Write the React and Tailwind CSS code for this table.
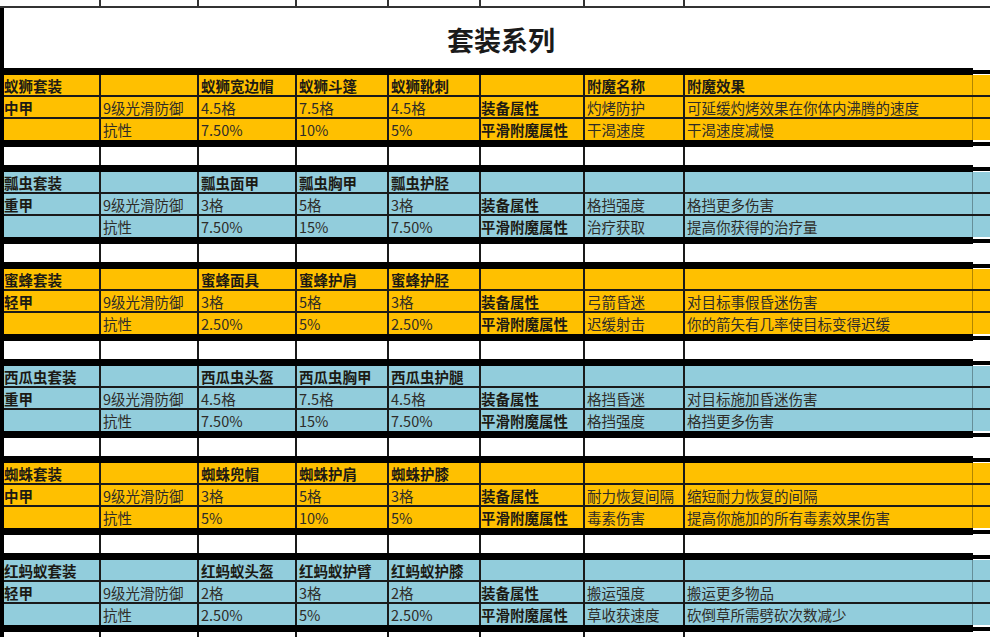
import React from "react";

const GRID = "grid grid-cols-[97px_98px_98px_92px_92px_104px_100px_288px_17px]";
const YELLOW = "bg-[#FFC000]";
const BLUE = "bg-[#92CDDC]";

const blocks = [
  {
    bg: YELLOW,
    rows: [
      ["蚁狮套装", "", "蚁狮宽边帽", "蚁狮斗篷", "蚁狮靴刺", "", "附魔名称", "附魔效果"],
      ["中甲", "9级光滑防御", "4.5格", "7.5格", "4.5格", "装备属性", "灼烤防护", "可延缓灼烤效果在你体内沸腾的速度"],
      ["", "抗性", "7.50%", "10%", "5%", "平滑附魔属性", "干渴速度", "干渴速度减慢"],
    ],
  },
  {
    bg: BLUE,
    rows: [
      ["瓢虫套装", "", "瓢虫面甲", "瓢虫胸甲", "瓢虫护胫", "", "", ""],
      ["重甲", "9级光滑防御", "3格", "5格", "3格", "装备属性", "格挡强度", "格挡更多伤害"],
      ["", "抗性", "7.50%", "15%", "7.50%", "平滑附魔属性", "治疗获取", "提高你获得的治疗量"],
    ],
  },
  {
    bg: YELLOW,
    rows: [
      ["蜜蜂套装", "", "蜜蜂面具", "蜜蜂护肩", "蜜蜂护胫", "", "", ""],
      ["轻甲", "9级光滑防御", "3格", "5格", "3格", "装备属性", "弓箭昏迷", "对目标事假昏迷伤害"],
      ["", "抗性", "2.50%", "5%", "2.50%", "平滑附魔属性", "迟缓射击", "你的箭矢有几率使目标变得迟缓"],
    ],
  },
  {
    bg: BLUE,
    rows: [
      ["西瓜虫套装", "", "西瓜虫头盔", "西瓜虫胸甲", "西瓜虫护腿", "", "", ""],
      ["重甲", "9级光滑防御", "4.5格", "7.5格", "4.5格", "装备属性", "格挡昏迷", "对目标施加昏迷伤害"],
      ["", "抗性", "7.50%", "15%", "7.50%", "平滑附魔属性", "格挡强度", "格挡更多伤害"],
    ],
  },
  {
    bg: YELLOW,
    rows: [
      ["蜘蛛套装", "", "蜘蛛兜帽", "蜘蛛护肩", "蜘蛛护膝", "", "", ""],
      ["中甲", "9级光滑防御", "3格", "5格", "3格", "装备属性", "耐力恢复间隔", "缩短耐力恢复的间隔"],
      ["", "抗性", "5%", "10%", "5%", "平滑附魔属性", "毒素伤害", "提高你施加的所有毒素效果伤害"],
    ],
  },
  {
    bg: BLUE,
    rows: [
      ["红蚂蚁套装", "", "红蚂蚁头盔", "红蚂蚁护臂", "红蚂蚁护膝", "", "", ""],
      ["轻甲", "9级光滑防御", "2格", "3格", "2格", "装备属性", "搬运强度", "搬运更多物品"],
      ["", "抗性", "2.50%", "5%", "2.50%", "平滑附魔属性", "草收获速度", "砍倒草所需劈砍次数减少"],
    ],
  },
];

function isBold(r, c) {
  if (c === 0 || c === 5) return true;
  if (r === 0) return true;
  return false;
}

function Cell({ children, col, bold, blank }) {
  const border =
    col === 8
      ? ""
      : col === 7
      ? blank
        ? ""
        : "border-r border-black/30"
      : "border-r-2 border-[#1a1a1a]";
  const pad = col === 0 || col === 5 ? "pl-0" : "pl-[2px]";
  return (
    <div
      className={`${border} ${pad} pt-[2px] flex items-center overflow-hidden whitespace-nowrap leading-none ${
        bold ? "font-bold text-[#1c1a14]" : "font-normal text-[#2e2c28]"
      }`}
    >
      {children}
    </div>
  );
}

function Row({ cells, bg, r, last }) {
  const all = [...cells, ""];
  return (
    <div
      className={`${GRID} ${bg} ${
        last ? "h-[21px]" : "h-[22px] border-b-2 border-[#1a1a1a]"
      }`}
    >
      {all.map((t, c) => (
        <Cell key={c} col={c} bold={isBold(r, c)}>
          {t}
        </Cell>
      ))}
    </div>
  );
}

function Thick() {
  return (
    <div className="flex h-[7px]">
      <div className="w-[969px] bg-black" />
      <div className="w-[17px] flex items-center">
        <div className="h-[4px] w-full bg-black" />
      </div>
    </div>
  );
}

function Blank() {
  return (
    <div className={`${GRID} h-[18px] bg-white`}>
      {Array.from({ length: 9 }).map((_, c) => (
        <Cell key={c} col={c} blank />
      ))}
    </div>
  );
}

export default function App() {
  return (
    <div
      className="w-[990px] h-[637px] overflow-hidden bg-white text-[14.5px]"
      style={{ fontFamily: '"Noto Sans CJK SC", "Noto Sans", sans-serif' }}
    >
      {/* partial row at the very top */}
      <div className="flex h-[8px] border-b-2 border-[#333]">
        {[101, 98, 98, 92, 92, 104, 100].map((w, i) => (
          <div key={i} style={{ width: w }} className="border-r-2 border-[#333]" />
        ))}
      </div>

      <div className="border-l-4 border-black">
        <div className="h-[60px] flex items-center justify-center pt-[4px] pl-[8px] text-[27px] font-bold text-[#1a1a1a]">
          套装系列
        </div>
        <Thick />
        {blocks.map((b, i) => (
          <div key={i}>
            {b.rows.map((cells, r) => (
              <Row key={r} cells={cells} bg={b.bg} r={r} last={r === 2} />
            ))}
            <Thick />
            <Blank />
            <Thick />
          </div>
        ))}
      </div>
    </div>
  );
}
